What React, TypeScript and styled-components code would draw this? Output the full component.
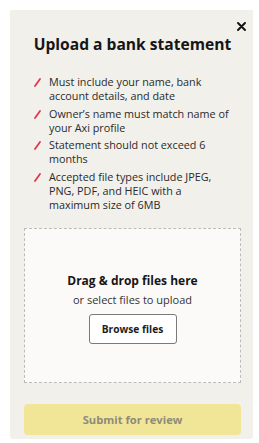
import React from "react";
import styled, { createGlobalStyle } from "styled-components";

const Global = createGlobalStyle`
  html, body { margin: 0; padding: 0; background: #ffffff; }
  body { font-family: "Open Sans", "Noto Sans", sans-serif; color: #1c1c1c; }
  * { box-sizing: border-box; }
`;

const Page = styled.div`
  padding: 10px 6px 0 10px;
`;

const Card = styled.div`
  position: relative;
  background: #f2f0eb;
  border-radius: 0 0 3px 3px;
  padding: 23px 12px 3px 14px;
  display: flex;
  flex-direction: column;
  height: 429px;
`;

const CloseButton = styled.button`
  position: absolute;
  top: 11px;
  right: 7px;
  width: 10px;
  height: 10px;
  padding: 0;
  border: none;
  background: transparent;
  display: flex;
  align-items: center;
  justify-content: center;
  cursor: pointer;
`;

const Title = styled.h1`
  margin: 0;
  font-size: 15.6px;
  line-height: 22px;
  font-weight: 700;
  text-align: center;
  color: #161616;
`;

const List = styled.ul`
  list-style: none;
  margin: 20px 0 0 0;
  padding: 0 6px 0 10px;
  display: flex;
  flex-direction: column;
  gap: 3.5px;
`;

const Item = styled.li`
  display: flex;
  align-items: flex-start;
  gap: 8px;
  font-size: 10.8px;
  line-height: 14px;
  color: #2a2a2a;
`;

const Slash = styled.svg`
  flex: none;
  margin-top: 3px;
`;

const DropZone = styled.div`
  margin-top: 16px;
  height: 155px;
  border: 1px dashed #bdbbb6;
  background: #fbfaf8;
  display: flex;
  flex-direction: column;
  align-items: center;
  justify-content: center;
  padding-top: 6px;
`;

const DropTitle = styled.div`
  font-size: 12px;
  font-weight: 700;
  line-height: 15px;
  color: #161616;
`;

const DropSub = styled.div`
  margin-top: 5px;
  font-size: 11px;
  line-height: 14px;
  color: #333;
`;

const BrowseButton = styled.button`
  margin-top: 7px;
  width: 88px;
  height: 30px;
  background: #ffffff;
  border: 1px solid #7a7a7a;
  border-radius: 3px;
  font-family: inherit;
  font-size: 10.2px;
  font-weight: 700;
  color: #1c1c1c;
  cursor: pointer;
`;

const SubmitButton = styled.button`
  margin-top: 21px;
  height: 31px;
  width: 100%;
  border: none;
  border-radius: 4px;
  background: #f1e598;
  font-family: inherit;
  font-size: 11.2px;
  font-weight: 700;
  color: #8e8b78;
`;

const items = [
  "Must include your name, bank account details, and date",
  "Owner\u2019s name must match name of your Axi profile",
  "Statement should not exceed 6 months",
  "Accepted file types include JPEG, PNG, PDF, and HEIC with a maximum size of 6MB",
];

export default function App() {
  return (
    <Page>
      <Global />
      <Card>
        <CloseButton aria-label="Close">
          <svg width="9" height="9" viewBox="0 0 9 9">
            <path d="M1 1 L8 8 M8 1 L1 8" stroke="#111" strokeWidth="1.9" strokeLinecap="round" />
          </svg>
        </CloseButton>
        <Title>Upload a bank statement</Title>
        <List>
          {items.map((t) => (
            <Item key={t}>
              <Slash width="7" height="9" viewBox="0 0 7 9">
                <path d="M1 8 L6 1" stroke="#e5354b" strokeWidth="1.8" strokeLinecap="round" />
              </Slash>
              <span>{t}</span>
            </Item>
          ))}
        </List>
        <DropZone>
          <DropTitle>Drag &amp; drop files here</DropTitle>
          <DropSub>or select files to upload</DropSub>
          <BrowseButton>Browse files</BrowseButton>
        </DropZone>
        <SubmitButton disabled>Submit for review</SubmitButton>
      </Card>
    </Page>
  );
}
